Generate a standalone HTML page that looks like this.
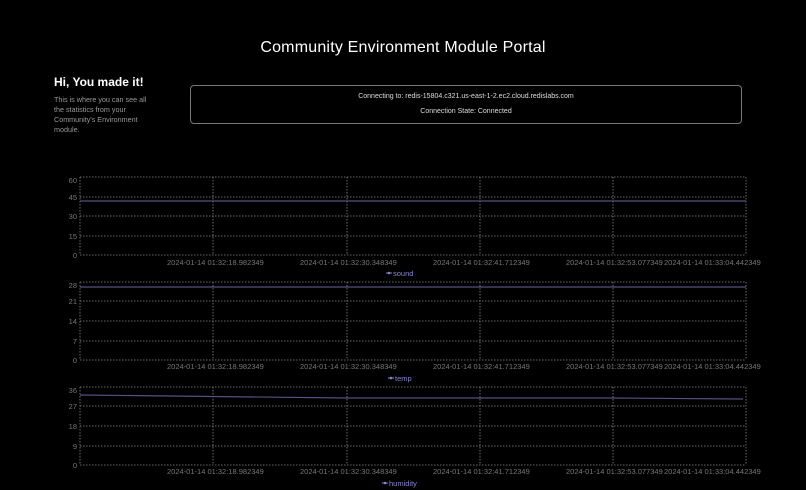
<!DOCTYPE html>
<html><head><style>
body{margin:0;background:#000;width:806px;height:490px;overflow:hidden;font-family:"Liberation Sans",sans-serif;color:#fff;position:relative}
h1{position:absolute;top:39px;left:0;width:806px;text-align:center;font-size:16px;font-weight:normal;margin:0;letter-spacing:.2px}
.hi{position:absolute;left:54px;top:75px;font-size:12px;font-weight:bold}
.p{position:absolute;left:54px;top:95px;width:96px;font-size:7.2px;line-height:10px;color:#999}
.box{position:absolute;left:190px;top:85px;width:550px;height:37px;border:1px solid #777;border-radius:4px;font-size:7px;text-align:center;color:#ddd}
svg{position:absolute;left:0;top:0}
svg text{font-family:"Liberation Sans",sans-serif;font-size:7.5px;fill:#777}
</style></head><body>
<h1>Community Environment Module Portal</h1>
<div class="hi">Hi, You made it!</div>
<div class="p">This is where you can see all the statistics from your Community's Environment module.</div>
<div class="box"><div style="margin-top:7px">Connecting to: redis-15804.c321.us-east-1-2.ec2.cloud.redislabs.com</div><div style="margin-top:8px">Connection State: Connected</div></div>
<svg width="806" height="490">
<g stroke="#888" stroke-width="0.8" stroke-dasharray="1.5,1.5" fill="none">
<path d="M80 177H746M80 197H746M80 216H746M80 236H746M80 255H746M80 177V255M213 177V255M347 177V255M480 177V255M613 177V255M746 177V255"/>
<path d="M80 282H746M80 301H746M80 321H746M80 341H746M80 360H746M80 282V360M213 282V360M347 282V360M480 282V360M613 282V360M746 282V360"/>
<path d="M80 387H746M80 406H746M80 426H746M80 446H746M80 465H746M80 387V465M213 387V465M347 387V465M480 387V465M613 387V465M746 387V465"/>
</g>
<g stroke="#55507f" stroke-width="1.2" fill="none">
<path d="M80 201H746"/><path d="M80 287H746"/><path d="M80 395L347 398L613 398L743 399"/>
</g>
<g text-anchor="end">
<text x="77" y="183">60</text><text x="77" y="200">45</text><text x="77" y="219">30</text><text x="77" y="239">15</text><text x="77" y="258">0</text>
<text x="77" y="288">28</text><text x="77" y="304">21</text><text x="77" y="324">14</text><text x="77" y="344">7</text><text x="77" y="363">0</text>
<text x="77" y="393">36</text><text x="77" y="409">27</text><text x="77" y="429">18</text><text x="77" y="449">9</text><text x="77" y="468">0</text>
</g>
<g>
<text x="167" y="265">2024-01-14 01:32:18.982349</text><text x="300" y="265">2024-01-14 01:32:30.348349</text><text x="433" y="265">2024-01-14 01:32:41.712349</text><text x="566" y="265">2024-01-14 01:32:53.077349</text><text x="664" y="265">2024-01-14 01:33:04.442349</text>
<text x="167" y="369">2024-01-14 01:32:18.982349</text><text x="300" y="369">2024-01-14 01:32:30.348349</text><text x="433" y="369">2024-01-14 01:32:41.712349</text><text x="566" y="369">2024-01-14 01:32:53.077349</text><text x="664" y="369">2024-01-14 01:33:04.442349</text>
<text x="167" y="474">2024-01-14 01:32:18.982349</text><text x="300" y="474">2024-01-14 01:32:30.348349</text><text x="433" y="474">2024-01-14 01:32:41.712349</text><text x="566" y="474">2024-01-14 01:32:53.077349</text><text x="664" y="474">2024-01-14 01:33:04.442349</text>
</g>
<g style="fill:#8a84d0">
<path d="M386 273H392" stroke="#8a84d0"/><circle cx="389" cy="273" r="1.3"/><text x="393" y="276" style="fill:#8a84d0">sound</text>
<path d="M388 378H394" stroke="#8a84d0"/><circle cx="391" cy="378" r="1.3"/><text x="395" y="381" style="fill:#8a84d0">temp</text>
<path d="M382 483H388" stroke="#8a84d0"/><circle cx="385" cy="483" r="1.3"/><text x="389" y="486" style="fill:#8a84d0">humidity</text>
</g>
</svg>
</body></html>
